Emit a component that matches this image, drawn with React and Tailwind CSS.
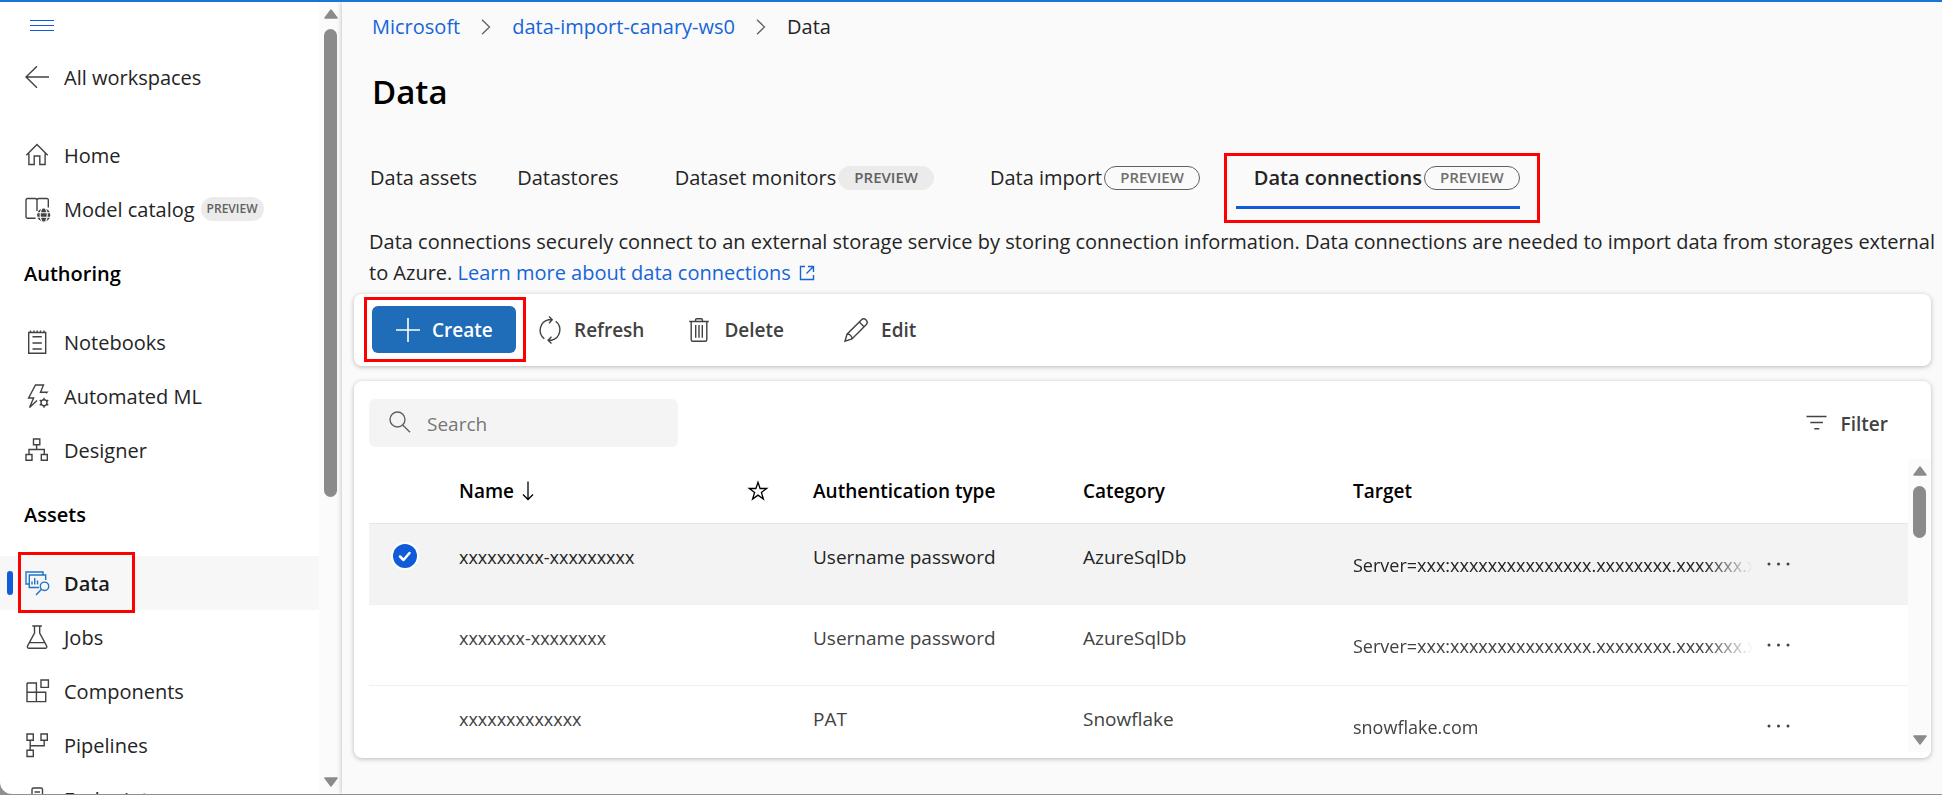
import React from "react";

function Icon({ children, className = "size-6", stroke = 1.4, view = "0 0 24 24" }) {
  return (
    <svg
      className={`shrink-0 overflow-visible ${className}`}
      viewBox={view}
      fill="none"
      stroke="currentColor"
      strokeWidth={stroke}
      aria-hidden="true"
    >
      {children}
    </svg>
  );
}

const icons = {
  back: <path d="M24 12H1M12 1.2 1 12l11 10.8" />,
  home: <path d="M1.3 12.2 12 1.6l10.7 10.6M3.9 10.5v11h5.3V13h5.6v8.500h5.300v-11" />,
  catalog: (
    <>
      <path d="M12 3v11M10.600 21.300H2.500a1.500 1.500 0 0 1-1.500-1.500V3a1.500 1.500 0 0 1 1.500-1.500h7.500a2 2 0 0 1 2 2 2 2 0 0 1 2-2h7.500A1.500 1.500 0 0 1 23.300 3v7.500" />
      <circle cx="18.700" cy="18" r="6.600" fill="currentColor" stroke="none" />
      <path d="M12 15.800h13.500M12 20.200h13.500" stroke="#fff" strokeWidth="1.100" />
      <path d="M17 11.200c-2.200 4-2.200 9.600 0 13.600M20.400 11.200c2.200 4 2.200 9.600 0 13.600" stroke="#fff" strokeWidth="1.100" />
    </>
  ),
  notebook: (
    <path d="M3.700 2.500h17v20.800h-17zM5.500.5v2M9 .5v2M12.200.5v2M15.500.5v2M19 .5v2M7.500 6.700h9.300M7.500 13h9.300M7.500 19h9.300" />
  ),
  automl: (
    <>
      <path d="M21 9.300l1-1h-6.500L18.500 1h-8L3.600 14h5L4.500 23.500 12 16.500" />
      <circle cx="19" cy="18.700" r="3" />
      <path d="M19 13.700v2M19 21.700v2M14.700 16.200l1.700 1M21.600 20.200l1.700 1M14.700 21.200l1.700-1M21.600 17.200l1.700-1" />
    </>
  ),
  designer: <path d="M8.500 1H14.800v5.800H8.500zM1 16.500h6V22.300H1zM16.300 16.500h6V22.300h-6zM11.600 6.800v4.700M4 16.500v-5h15.300v5" />,
  data: (
    <>
      <path d="M4 13H1V1h17v3" />
      <path d="M14 16.500H4.300V4h16.400v5" />
      <path d="M7 10.500v3M9.700 7v6.500M12.500 9.500v4" />
      <circle cx="19.500" cy="15.300" r="4.200" />
      <path d="M16.500 18.300 11 24" />
    </>
  ),
  jobs: <path d="M7.300 1h9.600M9.500 1v7L2.600 20.800a1.600 1.600 0 0 0 1.400 2.500h16.200a1.600 1.600 0 0 0 1.400-2.500L14.700 8V1M4.700 17.600h14.700" />,
  components: <path d="M2 4h9.400v18.600M2 4v18.600h18.700v-9.300H2M16 1h7.400v7.400H16z" />,
  pipelines: <path d="M2 1h6.300v6.300H2zM16 1h6.300v6.300H16zM2 17.200h6.300v6.300H2zM5.200 7.300v9.900M19.200 7.300v5.500h-14" />,
  endpoints: <path d="M7 24V2.500A1.500 1.500 0 0 1 8.500 1h7.500a1.500 1.500 0 0 1 1.500 1.500V24M9.500 5h5.500" />,
};

function Highlight({ className }) {
  return <span aria-hidden="true" className={`pointer-events-none absolute z-10 border-3 border-[#fe0000] ${className}`} />;
}

function NavItem({ icon, label, badge, active }) {
  return (
    <li className={`relative flex h-[54px] shrink-0 items-center ${active ? "bg-[#f7f7f7]" : ""}`}>
      {active && <span className="absolute left-[7px] h-6 w-1.5 rounded-full bg-[#0f5bd8]" />}
      <a
        href="#"
        aria-current={active ? "page" : undefined}
        className={`flex items-center gap-[15px] pl-[25px] whitespace-nowrap ${active ? "font-semibold text-[#1b1b1b]" : "text-[#242424]"}`}
      >
        <Icon className={active ? "size-6 text-[#1f74c4]" : "size-6 text-[#424242]"}>{icons[icon]}</Icon>
        <span className="pt-0.5">{label}</span>
      </a>
      {badge && (
        <span className="ml-1.5 rounded-full bg-[#ebebeb] px-1.5 text-xs leading-6 font-semibold text-[#616161]">{badge}</span>
      )}
      {active && <Highlight className="-top-1 -bottom-[3px] left-[18px] w-[117px]" />}
    </li>
  );
}

function Heading({ children }) {
  return <h2 className="flex h-[79px] shrink-0 items-center pb-1 pl-6 font-semibold text-black">{children}</h2>;
}

function Scrollbar({ className, thumb }) {
  return (
    <div aria-hidden="true" className={`flex shrink-0 flex-col items-center bg-[#fbfbfb] text-[#8b8b8b] ${className}`}>
      <svg className="h-2.5 w-3.5 shrink-0" viewBox="0 0 14 10">
        <path d="M7 1 13 9H1z" fill="currentColor" stroke="currentColor" strokeWidth="1.500" strokeLinejoin="round" />
      </svg>
      <div className={`mt-2.5 w-[13px] shrink-0 rounded-full bg-[#8b8b8b] ${thumb}`} />
      <svg className="mt-auto h-2.5 w-3.5 shrink-0" viewBox="0 0 14 10">
        <path d="M7 9 13 1H1z" fill="currentColor" stroke="currentColor" strokeWidth="1.500" strokeLinejoin="round" />
      </svg>
    </div>
  );
}

function Sidebar() {
  return (
    <aside className="flex shrink-0 overflow-hidden rounded-bl-xl bg-white">
      <nav className="flex w-[319px] flex-col overflow-hidden" aria-label="Workspace">
        <button type="button" aria-label="Toggle navigation" className="mt-2.5 ml-[30px] flex h-7 w-6 shrink-0 items-center text-[#0f5bd8]">
          <Icon stroke={1}>
            <path d="M0 6.500h24M0 11.500h24M0 16.500h24" />
          </Icon>
        </button>
        <ul className="mt-2.5 mb-6 shrink-0">
          <NavItem icon="back" label="All workspaces" />
        </ul>
        <ul className="shrink-0">
          <NavItem icon="home" label="Home" />
          <NavItem icon="catalog" label="Model catalog" badge="PREVIEW" />
        </ul>
        <Heading>Authoring</Heading>
        <ul className="shrink-0">
          <NavItem icon="notebook" label="Notebooks" />
          <NavItem icon="automl" label="Automated ML" />
          <NavItem icon="designer" label="Designer" />
        </ul>
        <Heading>Assets</Heading>
        <ul className="shrink-0">
          <NavItem icon="data" label="Data" active />
          <NavItem icon="jobs" label="Jobs" />
          <NavItem icon="components" label="Components" />
          <NavItem icon="pipelines" label="Pipelines" />
          <NavItem icon="endpoints" label="Endpoints" />
        </ul>
      </nav>
      <Scrollbar className="w-[23px] pt-[7px] pb-[7px]" thumb="h-[468px]" />
    </aside>
  );
}

function Chevron() {
  return (
    <Icon className="size-4 text-[#616161]" view="0 0 16 16" stroke={1.3}>
      <path d="M4 .8 11.500 8 4 15.200" />
    </Icon>
  );
}

function TabBadge({ outline, children }) {
  return (
    <span
      className={`ml-0.5 inline-flex h-6 items-center rounded-full border px-[15px] text-[15px] font-semibold ${
        outline ? "border-[#616161] text-[#707070]" : "border-[#ebebeb] bg-[#ebebeb] text-[#616161]"
      }`}
    >
      {children}
    </span>
  );
}

function Tab({ children, className = "", active }) {
  return (
    <button
      type="button"
      role="tab"
      aria-selected={!!active}
      className={`relative flex h-[63px] items-center whitespace-nowrap text-[#242424] ${className}`}
    >
      {children}
    </button>
  );
}

function ToolButton({ label, className, children }) {
  return (
    <button type="button" className={`flex items-center text-[19px] font-semibold text-[#424242] ${className}`}>
      {children}
      <span className="pt-0.5">{label}</span>
    </button>
  );
}

const rows = [
  { name: "xxxxxxxxx-xxxxxxxxx", auth: "Username password", category: "AzureSqlDb", target: "Server=xxx:xxxxxxxxxxxxxxx.xxxxxxxx.xxxxxxx.xxxxxx", selected: true },
  { name: "xxxxxxx-xxxxxxxx", auth: "Username password", category: "AzureSqlDb", target: "Server=xxx:xxxxxxxxxxxxxxx.xxxxxxxx.xxxxxxx.xxxxxx" },
  { name: "xxxxxxxxxxxxx", auth: "PAT", category: "Snowflake", target: "snowflake.com" },
];

function ConnectionsTable() {
  return (
    <table className="w-full table-fixed border-collapse text-[19px] leading-7">
      <colgroup>
        <col className="w-[90px]" />
        <col className="w-[289px]" />
        <col className="w-[65px]" />
        <col className="w-[270px]" />
        <col className="w-[270px]" />
        <col className="w-[400px]" />
        <col />
      </colgroup>
      <thead>
        <tr className="h-16 border-b border-[#e6e6e6] text-left text-black">
          <th aria-label="Selected" />
          <th className="font-semibold" aria-sort="descending">
            <button type="button" className="flex items-center gap-1">
              Name
              <Icon className="size-5" view="0 0 20 20" stroke={1.3}>
                <path d="M10 .5v18M5 13.500l5 5 5-5" />
              </Icon>
            </button>
          </th>
          <th aria-label="Favorite">
            <Icon className="size-5" view="0 0 20 20" stroke={1.3}>
              <path d="M10 1.200l2.100 6.300h6.600l-5.300 4 2 6.500L10 14.100l-5.400 3.900 2-6.500-5.300-4h6.600z" />
            </Icon>
          </th>
          <th className="font-semibold">Authentication type</th>
          <th className="font-semibold">Category</th>
          <th className="font-semibold">Target</th>
          <th aria-label="Actions" />
        </tr>
      </thead>
      <tbody>
        {rows.map((r) => (
          <tr
            key={r.name}
            className={`h-[81px] border-b border-[#f0f0f0] align-top ${r.selected ? "bg-[#f3f3f3] text-[#242424]" : "text-[#424242]"}`}
          >
            <td className="pt-5">
              <span className="relative ml-6 flex size-6">
                <input
                  type="checkbox"
                  defaultChecked={r.selected}
                  aria-label={`Select ${r.name}`}
                  className="peer size-6 appearance-none rounded-full opacity-0 ring-2 ring-white checked:bg-[#0f5bd8] checked:opacity-100"
                />
                <svg viewBox="0 0 24 24" className="pointer-events-none absolute inset-0 hidden size-6 peer-checked:block" fill="none" stroke="#fff" strokeWidth="2.500" strokeLinecap="round" strokeLinejoin="round" aria-hidden="true">
                  <path d="M7 12.500l3.500 3.500 6-7" />
                </svg>
              </span>
            </td>
            <td className="pt-[19px] text-lg leading-7">{r.name}</td>
            <td />
            <td className="pt-[19px]">{r.auth}</td>
            <td className="pt-[19px]">{r.category}</td>
            <td className="pt-[27px] text-lg leading-7">
              <div className="overflow-hidden whitespace-nowrap [mask-image:linear-gradient(to_right,black_88%,transparent)]">{r.target}</div>
            </td>
            <td className="pt-[26px]">
              <button type="button" aria-label={`More actions for ${r.name}`} className="ml-3.5 flex h-7 items-center text-[#424242]">
                <svg viewBox="0 0 24 4" className="h-1 w-6" fill="currentColor" aria-hidden="true">
                  <circle cx="2" cy="2" r="1.500" />
                  <circle cx="11.500" cy="2" r="1.500" />
                  <circle cx="21" cy="2" r="1.500" />
                </svg>
              </button>
            </td>
          </tr>
        ))}
      </tbody>
    </table>
  );
}

export default function App() {
  return (
    <div className="flex h-screen flex-col overflow-hidden border-t-2 border-b border-t-[#1976d2] border-b-[#8f8f8f] bg-[#8f8f8f] font-['Open_Sans','Noto_Sans',sans-serif] text-xl text-[#242424]">
      <div className="flex min-h-0 flex-1">
        <Sidebar />
        <main className="z-10 flex min-w-0 flex-1 flex-col bg-[#fafafa] pl-3 shadow-[0_0_5px_rgba(0,0,0,0.28)]">
          <nav aria-label="Breadcrumb" className="mt-[11px] flex h-7 items-center gap-[18px] pl-[18px]">
            <a href="#" className="text-[#1665d8]">Microsoft</a>
            <Chevron />
            <a href="#" className="text-[#1665d8]">data-import-canary-ws0</a>
            <Chevron />
            <span>Data</span>
          </nav>
          <h1 className="mt-[27px] pl-[18px] text-[33px] leading-12 font-semibold text-black">Data</h1>

          <div role="tablist" className="mt-[30px] flex pl-4">
            <Tab>Data assets</Tab>
            <Tab className="ml-10">Datastores</Tab>
            <Tab className="ml-14">
              Dataset monitors<TabBadge>PREVIEW</TabBadge>
            </Tab>
            <Tab className="ml-14">
              Data import<TabBadge outline>PREVIEW</TabBadge>
            </Tab>
            <Tab active className="ml-9 border-b-3 border-[#0f5bd8] pt-[3px] pl-[18px] font-semibold text-[#1b1b1b]">
              Data connections<TabBadge outline>PREVIEW</TabBadge>
              <Highlight className="top-[7px] -right-5 -bottom-[17px] -left-3" />
            </Tab>
          </div>

          <p className="mt-[17px] pl-[15px] leading-[31px]">
            Data connections securely connect to an external storage service by storing connection information. Data connections are
            needed to import data from storages external to Azure.{" "}
            <a href="#" className="text-[#1665d8]">
              Learn more about data connections
              <Icon className="ml-2 inline-block size-4 align-[-1px]" view="0 0 16 16">
                <path d="M6 1.500H1.500v13h13V10M9 1.500h5.500V7M14.500 1.500 7.500 8.500" />
              </Icon>
            </a>
          </p>

          <section aria-label="Actions" className="mt-1.5 mr-[11px] flex h-[72px] shrink-0 items-center rounded-lg bg-white pb-px pl-[18px] shadow-[0_1px_5px_rgba(0,0,0,0.26)]">
            <div className="relative">
              <button type="button" className="flex h-[47px] w-36 items-center gap-3 rounded-md bg-[#1f6cb9] pl-6 text-[19px] font-semibold text-white">
                <Icon stroke={1.6}>
                  <path d="M12 0v24M0 12h24" />
                </Icon>
                <span className="pt-0.5">Create</span>
              </button>
              <Highlight className="-top-[9px] -right-2.5 -bottom-[9px] -left-2" />
            </div>
            <ToolButton label="Refresh" className="ml-[22px] gap-3">
              <Icon>
                <path d="M6.300 20.700A10.700 10.700 0 0 1 10.500 1.800h3.500M11-1.600l3.200 3.400L11 5.300M17.700 3.300A10.700 10.700 0 0 1 13.500 22.200h-3.200M13.500 18.700l-3.400 3.500 3.400 3.400" />
              </Icon>
            </ToolButton>
            <ToolButton label="Delete" className="ml-[45px] gap-[15px]">
              <Icon className="h-6 w-5" view="0 0 20 24">
                <path d="M.2 3.500h19.600M6.600 3.500V1.800a1 1 0 0 1 1-1h4.800a1 1 0 0 1 1 1v1.700M2.200 3.500v18.300a1.500 1.500 0 0 0 1.500 1.500h12.600a1.500 1.500 0 0 0 1.500-1.500V3.500M6.700 7v12.700M10 7v12.700M13.300 7v12.700" />
              </Icon>
            </ToolButton>
            <ToolButton label="Edit" className="ml-[60px] gap-[13px]">
              <Icon>
                <path d="M1 23.200l2-7L17.300 1.900a3.300 3.300 0 0 1 4.800 4.800L8 21zM15.300 4l4.700 4.700M3 16.200A4.500 4.500 0 0 1 8 21" />
              </Icon>
            </ToolButton>
          </section>

          <section aria-label="Data connections" className="mt-[15px] mr-[11px] mb-9 flex min-h-0 flex-1 flex-col overflow-hidden rounded-lg bg-white pt-[18px] pb-1.5 pl-[15px] shadow-[0_1px_5px_rgba(0,0,0,0.26)]">
            <div className="flex h-12 shrink-0 items-center justify-between pr-[43px]">
              <label className="flex h-12 w-[309px] items-center gap-4 rounded-md bg-[#f4f4f4] pl-5">
                <Icon className="size-[22px] text-[#616161]" view="0 0 22 22">
                  <circle cx="8.500" cy="7.500" r="7.500" />
                  <path d="M13.700 13l7.300 7.300" />
                </Icon>
                <input type="search" placeholder="Search" aria-label="Search" className="min-w-0 flex-1 bg-transparent pt-0.5 text-[19px] outline-none placeholder:text-[#767676]" />
              </label>
              <ToolButton label="Filter" className="gap-3.5">
                <Icon className="h-4 w-[21px]" view="0 0 21 16" stroke={1.6}>
                  <path d="M.5 1.500h20M4.300 7.500h12.600M8.300 13.700h5" />
                </Icon>
              </ToolButton>
            </div>
            <div className="mt-3 flex min-h-0 flex-1">
              <div className="min-w-0 flex-1 overflow-hidden">
                <ConnectionsTable />
              </div>
              <Scrollbar className="w-[23px] pt-[7px] pb-[7px]" thumb="h-[52px]" />
            </div>
          </section>
        </main>
      </div>
    </div>
  );
}
